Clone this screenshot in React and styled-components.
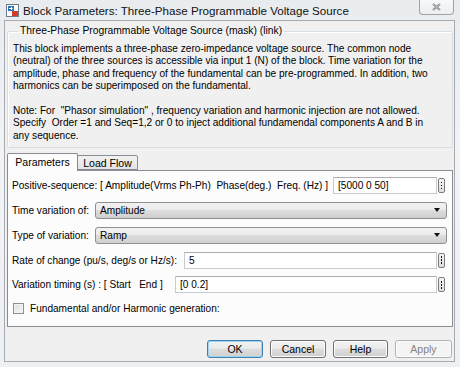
import React from "react";
import styled, { createGlobalStyle } from "styled-components";

const GlobalStyle = createGlobalStyle`
  html, body {
    margin: 0;
    padding: 0;
    background: #dfe7ef;
  }
  body {
    font-family: "Liberation Sans", Arial, sans-serif;
    color: #000;
  }
`;

const Window = styled.div`
  position: relative;
  width: 460px;
  height: 367px;
  box-sizing: border-box;
  display: flex;
  flex-direction: column;
  padding: 0 5px 5px 4px;
  background: linear-gradient(180deg, #e9ecef 0%, #f1f3f5 40%, #eef1f4 100%);
`;

const TitleBar = styled.div`
  height: 20px;
  display: flex;
  align-items: center;
  padding-left: 2px;
  gap: 4px;
  font-size: 11.6px;
  color: #111;
  white-space: nowrap;
`;

const CloseButton = styled.div`
  position: absolute;
  top: 0;
  left: 419px;
  width: 35px;
  height: 15px;
  box-sizing: border-box;
  border: 1px solid #9ea4ab;
  border-top: none;
  border-radius: 0 0 4px 4px;
  background: linear-gradient(180deg, #f7f8f9 0%, #eceef0 100%);
  display: flex;
  align-items: center;
  justify-content: center;
`;

const Body = styled.div`
  flex: 1;
  display: flex;
  flex-direction: column;
  background: #f0f0f0;
  border: 1px solid #a7abb0;
  padding: 4px 1px 2px 2px;
`;

const GroupBox = styled.fieldset`
  margin: 0;
  padding: 6px 5px 5px 5px;
  border: 1px solid #d5dfe5;
  border-radius: 2px;
  box-shadow: inset 1px 1px 0 #fff;
  font-size: 10.1px;
`;

const Legend = styled.legend`
  padding: 0 2px;
  margin-left: 5px;
  font-size: 10.3px;
  line-height: 12px;
`;

const TextLine = styled.div`
  height: 12.4px;
  line-height: 12.4px;
  white-space: pre;
`;

const TabStrip = styled.div`
  display: flex;
  align-items: flex-end;
  height: 18px;
  margin-top: 4px;
  position: relative;
  z-index: 1;
`;

const Tab = styled.div`
  box-sizing: border-box;
  height: ${(p) => (p.$active ? "18px" : "15px")};
  width: ${(p) => p.$width}px;
  margin-bottom: ${(p) => (p.$active ? "-1px" : "0")};
  margin-left: ${(p) => (p.$active ? "0" : "-1px")};
  border: 1px solid #898c95;
  border-bottom: ${(p) => (p.$active ? "none" : "1px solid #898c95")};
  border-radius: 2px 2px 0 0;
  background: ${(p) =>
    p.$active ? "#fcfcfc" : "linear-gradient(180deg, #f2f2f2 0%, #e3e3e3 100%)"};
  font-size: 10.5px;
  display: flex;
  align-items: center;
  justify-content: center;
  padding-bottom: ${(p) => (p.$active ? "2px" : "0")};
`;

const TabPanel = styled.div`
  height: 157px;
  box-sizing: border-box;
  border: 1px solid #898c95;
  background: #fcfcfc;
  padding: 6px 7px 0 4px;
  display: flex;
  flex-direction: column;
  gap: 7.8px;
  font-size: 10.1px;
`;

const Row = styled.div`
  height: 17px;
  display: flex;
  align-items: center;
`;

const Label = styled.div`
  flex: none;
  width: ${(p) => p.$width}px;
  white-space: pre;
`;

const TextInput = styled.div`
  flex: 1;
  height: 17px;
  box-sizing: border-box;
  border: 1px solid #c5cbd2;
  border-top-color: #abadb3;
  background: #fff;
  padding-left: 4px;
  display: flex;
  align-items: center;
`;

const DotsButton = styled.div`
  flex: none;
  width: 7px;
  height: 15px;
  margin-left: 1px;
  box-sizing: border-box;
  border: 1px solid #7c7c7c;
  border-radius: 2px;
  background: linear-gradient(180deg, #f4f4f4 0%, #dedede 100%);
  display: flex;
  flex-direction: column;
  align-items: center;
  justify-content: center;
  gap: 1.5px;
`;

const Dot = styled.span`
  width: 1.5px;
  height: 1.5px;
  background: #111;
`;

const Select = styled.div`
  flex: 1;
  height: 17px;
  margin-right: -2px;
  box-sizing: border-box;
  border: 1px solid #8e8f8f;
  border-radius: 3px;
  background: linear-gradient(180deg, #f2f2f2 0%, #ebebeb 45%, #dddddd 50%, #cfcfcf 100%);
  padding: 0 6px 0 4px;
  display: flex;
  align-items: center;
  justify-content: space-between;
`;

const Arrow = styled.span`
  width: 0;
  height: 0;
  border-left: 3px solid transparent;
  border-right: 3px solid transparent;
  border-top: 4px solid #111;
`;

const CheckRow = styled(Row)`
  gap: 6px;
  padding-left: 1px;
  margin-top: -1px;
`;

const Checkbox = styled.span`
  width: 11px;
  height: 11px;
  box-sizing: border-box;
  border: 1px solid #8f8f8f;
  background: linear-gradient(135deg, #dcdcdc 0%, #f8f8f8 100%);
  box-shadow: inset 0 0 0 1px #f4f4f4;
`;

const ButtonBar = styled.div`
  margin-top: auto;
  display: flex;
  justify-content: flex-end;
  gap: 7px;
  padding-right: 1px;
  padding-bottom: 1px;
`;

const Button = styled.div`
  width: ${(p) => p.$width}px;
  height: 18px;
  box-sizing: border-box;
  border: 1px solid ${(p) => (p.$default ? "#3c7fb1" : p.$disabled ? "#adb2b5" : "#707070")};
  border-radius: 3px;
  background: ${(p) =>
    p.$disabled
      ? "#f4f4f4"
      : "linear-gradient(180deg, #f2f2f2 0%, #ebebeb 45%, #dddddd 50%, #cfcfcf 100%)"};
  box-shadow: ${(p) => (p.$default ? "inset 0 0 0 1px #9dd5f2" : "inset 0 0 0 1px #fcfcfc")};
  color: ${(p) => (p.$disabled ? "#838383" : "#000")};
  font-size: 10.5px;
  display: flex;
  align-items: center;
  justify-content: center;
`;

function BlockIcon() {
  return (
    <svg width="13" height="13" viewBox="0 0 13 13">
      <rect x="0.5" y="0.5" width="12" height="12" fill="#fff" stroke="#6b7a8c" />
      <rect x="2" y="2" width="6" height="5" fill="#2f6fb5" />
      <path d="M3 4.5h3M5 3l1.5 1.5L5 6" stroke="#fff" strokeWidth="1" fill="none" />
      <rect x="6" y="7" width="6" height="5" fill="#d33a2a" />
    </svg>
  );
}

function CloseGlyph() {
  return (
    <svg width="9" height="8" viewBox="0 0 9 8">
      <path d="M1 1l7 6M8 1L1 7" stroke="#7a7f86" strokeWidth="2" fill="none" />
      <path d="M1 1l7 6M8 1L1 7" stroke="#e9ecef" strokeWidth="0.6" fill="none" />
    </svg>
  );
}

function Dots() {
  return (
    <DotsButton>
      <Dot />
      <Dot />
      <Dot />
    </DotsButton>
  );
}

const description = [
  "This block implements a three-phase zero-impedance voltage source. The common node",
  "(neutral) of the three sources is accessible via input 1 (N) of the block. Time variation for the",
  "amplitude, phase and frequency of the fundamental can be pre-programmed. In addition, two",
  "harmonics can be superimposed on the fundamental.",
  " ",
  "Note: For  \"Phasor simulation\" , frequency variation and harmonic injection are not allowed.",
  "Specify  Order =1 and Seq=1,2 or 0 to inject additional fundamendal components A and B in",
  "any sequence.",
];

export default function App() {
  return (
    <>
      <GlobalStyle />
      <Window>
        <TitleBar>
          <BlockIcon />
          <span>Block Parameters: Three-Phase Programmable Voltage Source</span>
        </TitleBar>
        <CloseButton>
          <CloseGlyph />
        </CloseButton>
        <Body>
          <GroupBox>
            <Legend>Three-Phase Programmable Voltage Source (mask) (link)</Legend>
            {description.map((line, i) => (
              <TextLine key={i}>{line}</TextLine>
            ))}
          </GroupBox>
          <TabStrip>
            <Tab $active $width={71}>Parameters</Tab>
            <Tab $width={61}>Load Flow</Tab>
          </TabStrip>
          <TabPanel>
            <Row>
              <Label $width={321}>
                {"Positive-sequence: [ Amplitude(Vrms Ph-Ph)  Phase(deg.)  Freq. (Hz) ]"}
              </Label>
              <TextInput>[5000 0 50]</TextInput>
              <Dots />
            </Row>
            <Row>
              <Label $width={83}>Time variation of:</Label>
              <Select>
                Amplitude
                <Arrow />
              </Select>
            </Row>
            <Row>
              <Label $width={83}>Type of variation:</Label>
              <Select>
                Ramp
                <Arrow />
              </Select>
            </Row>
            <Row>
              <Label $width={172}>Rate of change (pu/s, deg/s or Hz/s):</Label>
              <TextInput>5</TextInput>
              <Dots />
            </Row>
            <Row>
              <Label $width={163}>{"Variation timing (s) : [ Start   End ]"}</Label>
              <TextInput>[0 0.2]</TextInput>
              <Dots />
            </Row>
            <CheckRow>
              <Checkbox />
              <span>Fundamental and/or Harmonic generation:</span>
            </CheckRow>
          </TabPanel>
          <ButtonBar>
            <Button $width={56} $default>OK</Button>
            <Button $width={56}>Cancel</Button>
            <Button $width={55}>Help</Button>
            <Button $width={57} $disabled>Apply</Button>
          </ButtonBar>
        </Body>
      </Window>
    </>
  );
}
